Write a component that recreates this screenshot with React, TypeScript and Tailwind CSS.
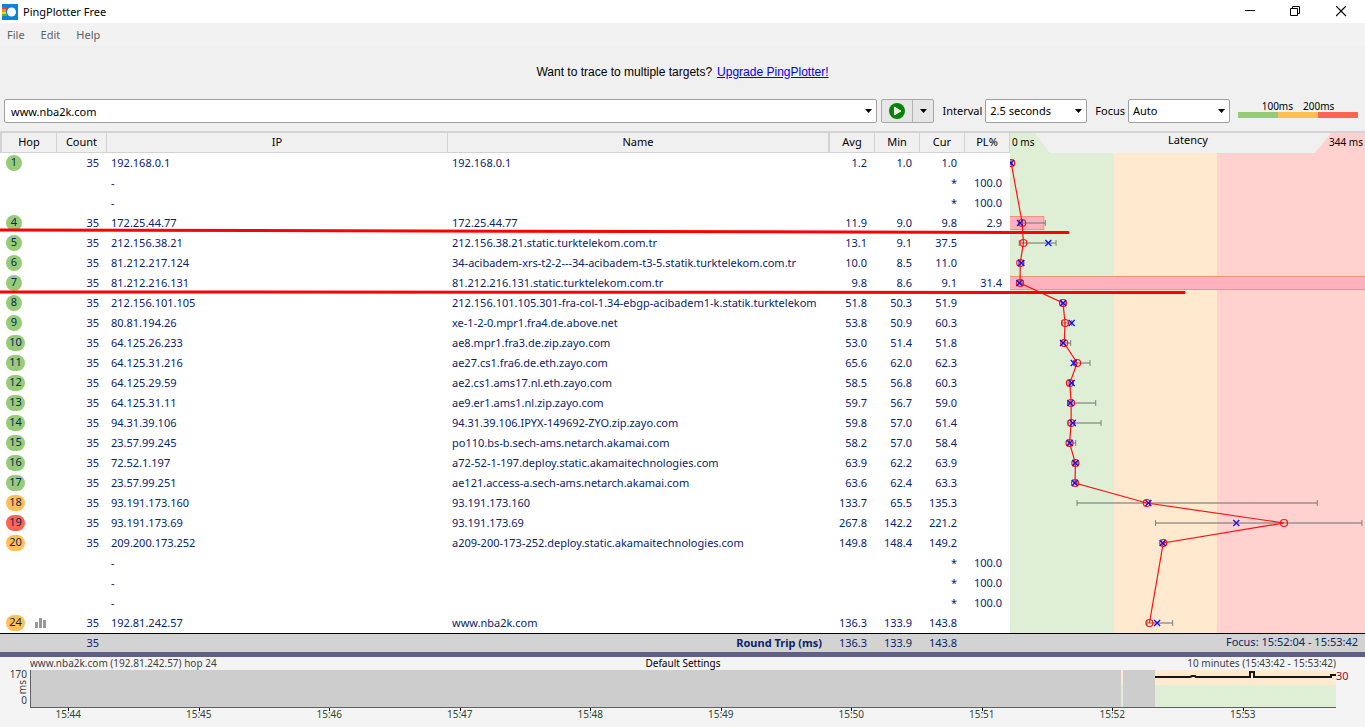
import { Fragment } from 'react';

type Hop = {
  hop: number;
  ip?: string;
  name?: string;
  avg?: number;
  min?: number;
  cur?: number;
  max?: number;
  loss?: number;
};

const hops: Hop[] = [
  { hop: 1, ip: '192.168.0.1', name: '192.168.0.1', avg: 1.2, min: 1.0, cur: 1.0, max: 2 },
  { hop: 2, loss: 100 },
  { hop: 3, loss: 100 },
  { hop: 4, ip: '172.25.44.77', name: '172.25.44.77', avg: 11.9, min: 9.0, cur: 9.8, max: 34.5, loss: 2.9 },
  { hop: 5, ip: '212.156.38.21', name: '212.156.38.21.static.turktelekom.com.tr', avg: 13.1, min: 9.1, cur: 37.5, max: 45 },
  { hop: 6, ip: '81.212.217.124', name: '34-acibadem-xrs-t2-2---34-acibadem-t3-5.statik.turktelekom.com.tr', avg: 10.0, min: 8.5, cur: 11.0, max: 13.5 },
  { hop: 7, ip: '81.212.216.131', name: '81.212.216.131.static.turktelekom.com.tr', avg: 9.8, min: 8.6, cur: 9.1, max: 13, loss: 31.4 },
  { hop: 8, ip: '212.156.101.105', name: '212.156.101.105.301-fra-col-1.34-ebgp-acibadem1-k.statik.turktelekom', avg: 51.8, min: 50.3, cur: 51.9, max: 54.5 },
  { hop: 9, ip: '80.81.194.26', name: 'xe-1-2-0.mpr1.fra4.de.above.net', avg: 53.8, min: 50.9, cur: 60.3, max: 60.3 },
  { hop: 10, ip: '64.125.26.233', name: 'ae8.mpr1.fra3.de.zip.zayo.com', avg: 53.0, min: 51.4, cur: 51.8, max: 59.3 },
  { hop: 11, ip: '64.125.31.216', name: 'ae27.cs1.fra6.de.eth.zayo.com', avg: 65.6, min: 62.0, cur: 62.3, max: 78.2 },
  { hop: 12, ip: '64.125.29.59', name: 'ae2.cs1.ams17.nl.eth.zayo.com', avg: 58.5, min: 56.8, cur: 60.3, max: 62 },
  { hop: 13, ip: '64.125.31.11', name: 'ae9.er1.ams1.nl.zip.zayo.com', avg: 59.7, min: 56.7, cur: 59.0, max: 83.8 },
  { hop: 14, ip: '94.31.39.106', name: '94.31.39.106.IPYX-149692-ZYO.zip.zayo.com', avg: 59.8, min: 57.0, cur: 61.4, max: 89 },
  { hop: 15, ip: '23.57.99.245', name: 'po110.bs-b.sech-ams.netarch.akamai.com', avg: 58.2, min: 57.0, cur: 58.4, max: 64.2 },
  { hop: 16, ip: '72.52.1.197', name: 'a72-52-1-197.deploy.static.akamaitechnologies.com', avg: 63.9, min: 62.2, cur: 63.9, max: 66.5 },
  { hop: 17, ip: '23.57.99.251', name: 'ae121.access-a.sech-ams.netarch.akamai.com', avg: 63.6, min: 62.4, cur: 63.3, max: 65.5 },
  { hop: 18, ip: '93.191.173.160', name: '93.191.173.160', avg: 133.7, min: 65.5, cur: 135.3, max: 300.4 },
  { hop: 19, ip: '93.191.173.69', name: '93.191.173.69', avg: 267.8, min: 142.2, cur: 221.2, max: 344 },
  { hop: 20, ip: '209.200.173.252', name: 'a209-200-173-252.deploy.static.akamaitechnologies.com', avg: 149.8, min: 148.4, cur: 149.2, max: 151.5 },
  { hop: 21, loss: 100 },
  { hop: 22, loss: 100 },
  { hop: 23, loss: 100 },
  { hop: 24, ip: '192.81.242.57', name: 'www.nba2k.com', avg: 136.3, min: 133.9, cur: 143.8, max: 159 }
];

const times = ['15:44', '15:45', '15:46', '15:47', '15:48', '15:49', '15:50', '15:51', '15:52', '15:53'];

const ROW = 20;
const HEAD = 20;
const scaleX = (ms: number) => ms * 1.023;
const rowY = (hop: number) => HEAD + (hop - 1) * ROW + ROW / 2;

function badgeColor(avg: number) {
  if (avg > 200) return 'bg-[#fa6450]';
  if (avg > 100) return 'bg-[#ffbf52]';
  return 'bg-[#96cc76]';
}

function Caret() {
  return (
    <svg className="pointer-events-none h-1 w-[7px]" viewBox="0 0 7 4" aria-hidden="true">
      <path d="M0 0h7L3.5 4z" fill="#000" />
    </svg>
  );
}

function TitleBar() {
  return (
    <header className="flex h-[23px] items-center bg-white pr-px pl-[2px] text-black">
      <svg className="h-4 w-4" viewBox="0 0 16 16" aria-hidden="true">
        <rect width="16" height="16" fill="#0a84d6" />
        <path d="M0 3h5v2H0z" fill="#e8402c" />
        <path d="M0 5h4v3H0z" fill="#f7941e" />
        <path d="M0 8h4v2H0z" fill="#f5d800" />
        <path d="M0 10h5v2H0z" fill="#5fb336" />
        <circle cx="9.5" cy="8" r="5.5" fill="#0a84d6" />
        <circle cx="9.5" cy="8" r="4.5" fill="#fff" />
      </svg>
      <h1 className="ml-[5px] flex-1">PingPlotter Free</h1>
      <button className="flex h-[23px] w-[46px] items-center justify-center" aria-label="Minimize">
        <svg className="h-[11px] w-[11px]" viewBox="0 0 11 11"><path d="M1 4.5h10" stroke="#000" /></svg>
      </button>
      <button className="flex h-[23px] w-[46px] items-center justify-center" aria-label="Restore">
        <svg className="h-[11px] w-[11px]" viewBox="0 0 11 11" fill="none" stroke="#000">
          <path d="M.5 2.5h7v7h-7zM2.5 2.5v-2h7v7h-2" />
        </svg>
      </button>
      <button className="flex h-[23px] w-[46px] items-center justify-center" aria-label="Close">
        <svg className="h-[11px] w-[11px]" viewBox="0 0 11 11"><path d="M0 0l10 10M10 0l-10 10" stroke="#000" strokeWidth="1.2" /></svg>
      </button>
    </header>
  );
}

function PickList({ id, label, value }: { id: string; label: string; value: string }) {
  return (
    <>
      <label htmlFor={id} className="ml-2">{label}</label>
      <div className="relative ml-[3px]">
        <select
          id={id}
          defaultValue={value}
          className="h-6 w-[102px] appearance-none rounded-[2px] border border-[#a0a0a0] bg-white pl-1 text-black"
        >
          <option>{value}</option>
        </select>
        <span className="pointer-events-none absolute top-[10px] right-[5px]"><Caret /></span>
      </div>
    </>
  );
}

function Toolbar() {
  return (
    <div className="flex h-8 items-start pr-[7px] pl-1 text-black">
      <div className="relative flex-1">
        <input
          aria-label="Target"
          defaultValue="www.nba2k.com"
          className="h-6 w-full rounded-[2px] border border-[#a0a0a0] bg-white px-[6px]"
        />
        <button className="absolute top-0 right-0 flex h-6 w-[17px] items-center justify-center" aria-label="Target history">
          <Caret />
        </button>
      </div>
      <div className="ml-1 flex h-6 w-[53px] rounded-[2px] border border-[#a8a8a8] bg-[#e6e6e6]">
        <button className="flex w-[31px] items-center justify-center border-r border-[#b4b4b4]" aria-label="Start trace">
          <svg className="h-4 w-4" viewBox="0 0 16 16">
            <circle cx="8" cy="8" r="8" fill="#078307" />
            <path d="M5.5 4.2v7.6L12 8z" fill="#dff0df" stroke="#fff" strokeWidth="1" />
          </svg>
        </button>
        <button className="flex flex-1 items-center justify-center" aria-label="Trace options">
          <Caret />
        </button>
      </div>
      <div className="flex items-center">
        <PickList id="interval" label="Interval" value="2.5 seconds" />
        <PickList id="focus" label="Focus" value="Auto" />
      </div>
      <div className="ml-2 w-[120px]">
        <div className="flex h-[13px] justify-center gap-[10px] text-[10px] leading-[15px]">
          <span>100ms</span>
          <span>200ms</span>
        </div>
        <div className="flex h-[6px]">
          <span className="flex-1 bg-[#96cc76]" />
          <span className="flex-1 bg-[#ffbf52]" />
          <span className="flex-1 bg-[#fa6450]" />
        </div>
      </div>
    </div>
  );
}

function HopTable() {
  const head = 'border-b border-r border-[#d3d3d3] p-0 pb-px font-normal';
  return (
    <table className="w-full table-fixed border-separate border-spacing-0 bg-white">
      <colgroup>
        <col className="w-[57px]" />
        <col className="w-[50px]" />
        <col className="w-[341px]" />
        <col />
        <col className="w-[45px]" />
        <col className="w-[45px]" />
        <col className="w-[45px]" />
        <col className="w-[45px]" />
      </colgroup>
      <thead>
        <tr className="h-5 bg-[#f0f0f0] leading-[14px] text-black">
          <th className={`${head} border-l-2`}>Hop</th>
          <th className={head}>Count</th>
          <th className={head}>IP</th>
          <th className={`${head} border-r-2`}>Name</th>
          <th className={head}>Avg</th>
          <th className={head}>Min</th>
          <th className={head}>Cur</th>
          <th className={head}>PL%</th>
        </tr>
      </thead>
      <tbody>
        {hops.map((h) => (
          <tr key={h.hop} className="h-5">
            <td className="p-0 pl-[6px]">
              {h.avg !== undefined && (
                <div className="flex items-center gap-[10px]">
                  <span
                    className={`h-4 rounded-full text-center leading-[14px] ${h.hop > 9 ? 'w-[19px]' : 'w-4'} ${badgeColor(h.avg)}`}
                  >
                    {h.hop}
                  </span>
                  {h.hop === 24 && (
                    <svg className="h-[10px] w-[11px]" viewBox="0 0 11 10" fill="#999" aria-hidden="true">
                      <path d="M0 4h3v6H0zM4 0h3v10H4zM8 2h3v8H8z" />
                    </svg>
                  )}
                </div>
              )}
            </td>
            <td className="p-0 pr-2 text-right">{h.ip && 35}</td>
            <td className="p-0 pl-1">{h.ip ?? '-'}</td>
            <td className="p-0 pr-2 pl-1">
              <div className="overflow-hidden whitespace-nowrap">{h.name}</div>
            </td>
            <td className="p-0 pr-2 text-right">{h.avg?.toFixed(1)}</td>
            <td className="p-0 pr-2 text-right">{h.min?.toFixed(1)}</td>
            <td className="p-0 pr-2 text-right">{h.cur?.toFixed(1) ?? '*'}</td>
            <td className="p-0 pr-2 text-right">{h.loss?.toFixed(1)}</td>
          </tr>
        ))}
      </tbody>
      <tfoot>
        <tr className="h-[19px] bg-[#d3d3d3]">
          <td className="border-t border-black p-0" />
          <td className="border-t border-black p-0 pr-2 text-right">35</td>
          <td className="border-t border-black p-0" />
          <td className="border-t border-black p-0 pr-2 text-right font-bold">Round Trip (ms)</td>
          <td className="border-t border-black p-0 pr-2 text-right">136.3</td>
          <td className="border-t border-black p-0 pr-2 text-right">133.9</td>
          <td className="border-t border-black p-0 pr-2 text-right">143.8</td>
          <td className="border-t border-black p-0" />
        </tr>
      </tfoot>
    </table>
  );
}

function LatencyChart() {
  const seen = hops.filter((h) => h.avg !== undefined);
  const points = seen.map((h) => `${scaleX(h.avg!)},${rowY(h.hop)}`).join(' ');
  return (
    <svg className="block h-[500px] w-[355px]" viewBox="0 0 355 500" role="img" aria-label="Latency per hop">
      <rect width="104" height="500" fill="#dfefd6" />
      <rect x="104" width="103" height="500" fill="#ffeacf" />
      <rect x="207" width="148" height="500" fill="#ffd2cf" />
      <path d="M25 0h296l-16 20H40z" fill="#f0f0f0" />
      <text x="2" y="13" fontSize="10" fill="#000">0 ms</text>
      <text x="178" y="11" textAnchor="middle" fontSize="11" fill="#000">Latency</text>
      <text x="353" y="13" textAnchor="end" fontSize="10" fill="#000">344 ms</text>

      {seen.map((h) => h.loss && (
        <rect
          key={h.hop}
          x="-1"
          y={rowY(h.hop) - 6.5}
          width={h.loss * 12}
          height="13"
          fill="#ffb1bd"
          stroke="#e9967a"
        />
      ))}

      {seen.map((h) => (
        <g key={h.hop} stroke="#808080">
          <path d={`M${scaleX(h.min!)} ${rowY(h.hop)}H${scaleX(h.max!)}`} strokeWidth="2" strokeOpacity=".6" />
          <path d={`M${scaleX(h.min!)} ${rowY(h.hop) - 3}v6M${scaleX(h.max!)} ${rowY(h.hop) - 3}v6`} />
        </g>
      ))}

      <polyline points={points} fill="none" stroke="#ff1010" strokeWidth="1.2" />

      {seen.map((h) => {
        const x = scaleX(h.cur!);
        const y = rowY(h.hop);
        return (
          <Fragment key={h.hop}>
            <circle cx={scaleX(h.avg!)} cy={y} r="3.5" fill="none" stroke="#ff1010" strokeWidth="1.2" />
            <path d={`M${x - 3} ${y - 3}l6 6M${x + 3} ${y - 3}l-6 6`} stroke="#1010f0" strokeWidth="1.3" />
          </Fragment>
        );
      })}
    </svg>
  );
}

function Timeline() {
  return (
    <section className="bg-[#f4f4f4] pr-[29px] text-[10px] text-[#404040]">
      <div className="grid h-[13px] grid-cols-3 pl-[30px] leading-[13px]">
        <span>www.nba2k.com (192.81.242.57) hop 24</span>
        <span className="text-center text-black">Default Settings</span>
        <span className="text-right">10 minutes (15:43:42 - 15:53:42)</span>
      </div>
      <div className="relative flex">
        <div className="flex w-[30px] flex-col items-end justify-between pr-[3px] pb-1 leading-[8px]">
          <span>170</span>
          <span className="rotate-180 leading-[10px] [writing-mode:vertical-rl]">ms</span>
          <span>0</span>
        </div>
        <div className="flex-1 border-b border-l border-[#606060]">
          <svg className="block h-[37px] w-full" viewBox="0 0 1305 37" preserveAspectRatio="none" role="img" aria-label="Latency history">
            <rect width="1305" height="37" fill="#cdcdcd" />
            <path d="M1090 0h2v15h-2zM1124 0h181v15h-181z" fill="#ffeacf" />
            <path d="M1090 15h2v22h-2zM1124 15h181v22h-181z" fill="#dfefd6" />
            <path d="M1124 7h35l2-1h3l1 1h54V2h4v5h77V5h5" fill="none" stroke="#151515" strokeWidth="2" />
          </svg>
        </div>
        <span className="absolute top-0 left-full text-[11px] leading-[11px] text-[#b80018]">30</span>
      </div>
      <div className="mr-[28px] ml-[3px] grid h-5 grid-cols-10 text-center leading-[12px] text-[#2c4a2c]">
        {times.map((t) => (
          <div key={t} className="relative">
            {t}
            <span className="absolute top-0 left-1/2 h-[3px] w-px bg-black" />
          </div>
        ))}
      </div>
    </section>
  );
}

export default function App() {
  return (
    <div className="min-h-screen overflow-hidden bg-[#f0f0f0] font-['Noto_Sans','Open_Sans',sans-serif] text-[11px] leading-[16px] text-[#0a246a]">
      <TitleBar />
      <nav className="flex h-[23px] items-center gap-4 bg-[#f2f2f2] pl-[7px] text-[#606060]">
        <button>File</button>
        <button>Edit</button>
        <button>Help</button>
      </nav>
      <p className="flex h-[53px] items-center justify-center gap-[5px] pb-[2px] font-['Liberation_Sans',Arial,sans-serif] text-xs text-black">
        Want to trace to multiple targets?
        <a href="#upgrade" className="text-[#0000f0] underline">Upgrade PingPlotter!</a>
      </p>
      <Toolbar />

      <main className="relative flex border-t-2 border-[#d3d3d3]">
        <div className="min-w-0 flex-1">
          <HopTable />
        </div>
        <div className="w-[355px]">
          <LatencyChart />
          <div className="h-[19px] border-t border-black bg-[#d3d3d3] pr-[7px] text-right">
            Focus: 15:52:04 - 15:53:42
          </div>
        </div>
        {/* hand-drawn marks under hops 4 and 7 */}
        <svg className="pointer-events-none absolute inset-0 h-full w-full" stroke="#ff0000" strokeWidth="3" strokeLinecap="round" aria-hidden="true">
          <path d="M0 97L1068 99.5" />
          <path d="M0 159L1184 159.5" />
        </svg>
      </main>

      <div className="h-[5px] bg-[#5f5f87]" />
      <Timeline />
    </div>
  );
}
